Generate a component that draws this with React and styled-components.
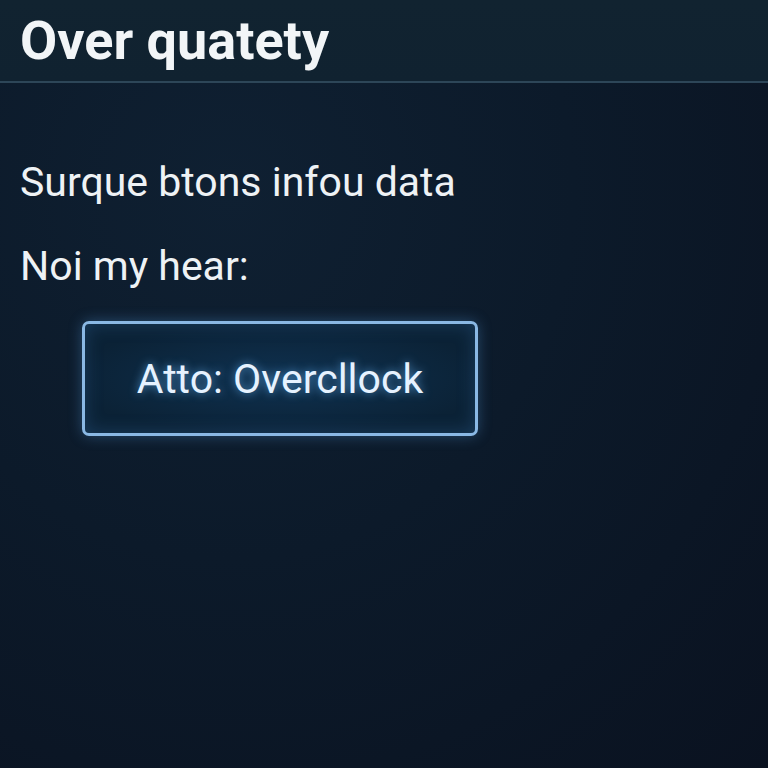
import React from "react";
import styled, { createGlobalStyle } from "styled-components";

const GlobalStyle = createGlobalStyle`
  html, body {
    margin: 0;
    padding: 0;
    height: 100%;
  }
  body {
    background: #0b1624;
    font-family: Roboto, "Liberation Sans", Arial, sans-serif;
  }
  #root {
    height: 100%;
  }
`;

const Screen = styled.div`
  width: 768px;
  height: 768px;
  display: flex;
  flex-direction: column;
  overflow: hidden;
  background: radial-gradient(
      ellipse at 30% 25%,
      #0f2032 0%,
      #0c1a2a 45%,
      #0a1220 100%
    );
`;

const Header = styled.header`
  height: 83px;
  flex-shrink: 0;
  display: flex;
  align-items: flex-start;
  padding: 0 20px;
  background: linear-gradient(180deg, #112330 0%, #102230 100%);
  border-bottom: 2px solid #2d4658;
  box-sizing: border-box;
`;

const Title = styled.h1`
  margin: 11px 0 0;
  font-size: 54px;
  font-weight: 700;
  color: #f2f5f7;
  line-height: 60px;
`;

const Body = styled.main`
  display: flex;
  flex-direction: column;
  align-items: flex-start;
  padding: 75px 20px 0;
`;

const Line = styled.p`
  margin: 0 0 ${props => props.gap || 0}px;
  font-size: 41px;
  line-height: 48px;
  color: #eef2f5;
`;

const GlowButton = styled.button`
  margin: 0 0 0 62px;
  width: 396px;
  height: 115px;
  box-sizing: border-box;
  border: 3px solid #8ab8e4;
  border-radius: 7px;
  background: radial-gradient(ellipse at center, #0f3150 0%, #0b2236 75%);
  box-shadow: 0 0 14px rgba(90, 160, 230, 0.35),
    inset 0 0 18px rgba(70, 140, 210, 0.25);
  color: #e6f2ff;
  font-family: Roboto, "Liberation Sans", Arial, sans-serif;
  font-size: 41px;
  text-shadow: 0 0 10px rgba(110, 190, 255, 0.7);
  cursor: pointer;
`;

export default function App() {
  return (
    <>
      <GlobalStyle />
      <Screen>
        <Header>
          <Title>Over quatety</Title>
        </Header>
        <Body>
          <Line gap={36}>Surque btons infou data</Line>
          <Line gap={31}>Noi my hear:</Line>
          <GlowButton>Atto: Overcllock</GlowButton>
        </Body>
      </Screen>
    </>
  );
}
